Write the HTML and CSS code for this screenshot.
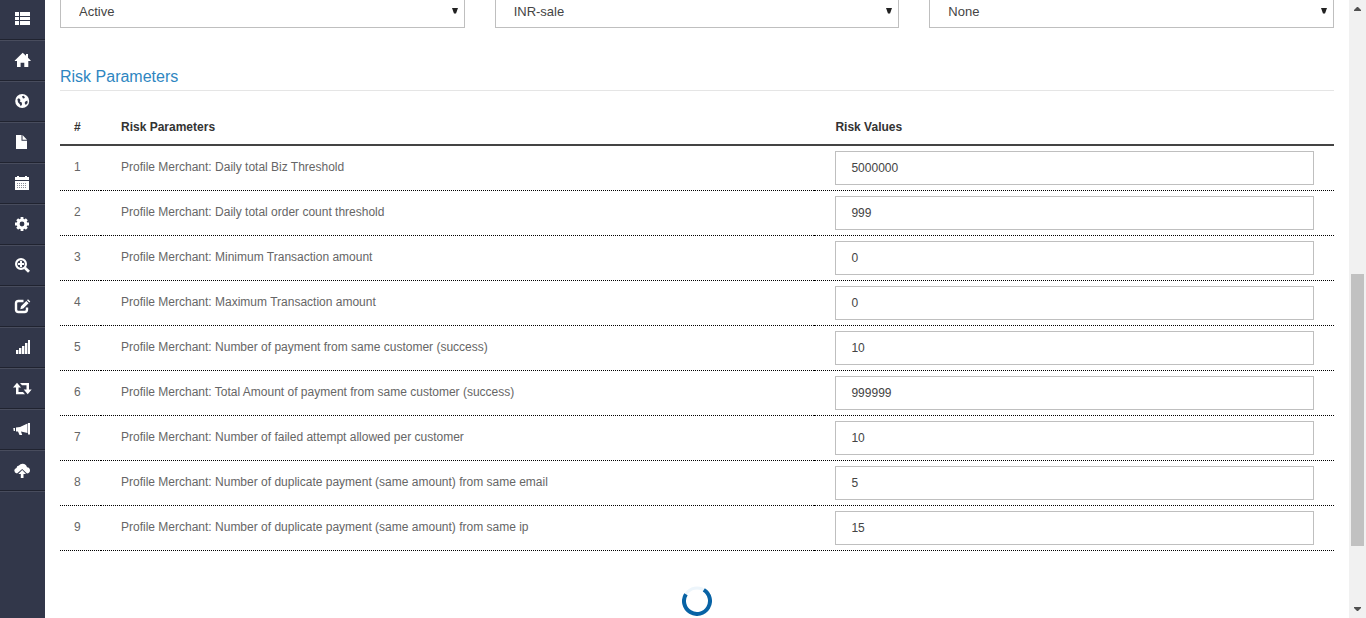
FILE: index.html
```html
<!DOCTYPE html>
<html lang="en">
<head>
<meta charset="utf-8">
<title>Risk Parameters</title>
<link rel="stylesheet" href="styles.css">
</head>
<body>
<nav class="sidebar" aria-label="Main menu">
  <a class="nav-item" href="#list" aria-label="List"><svg class="icon" viewBox="0 0 17 17"><path d="M1 1h4v4H1zM6 1h10v4H6zM1 6h4v3H1zM6 6h10v3H6zM1 10h4v4H1zM6 10h10v4H6z" fill="#fff"/></svg></a>
  <a class="nav-item" href="#home" aria-label="Home"><svg class="icon" viewBox="0 0 17 17"><path d="M8.700.7 12 3.700V2h2v3.700L16.700 8.500V9H14.300v6h-4v-4.300H6.600V15H3V9H.8v-.5z" fill="#fff"/></svg></a>
  <a class="nav-item" href="#globe" aria-label="Regions"><svg class="icon" viewBox="0 0 17 17"><circle cx="8.200" cy="8" r="7" fill="#fff"/><path d="M8 3.200 9.500 2.800 11 4.200 10 5.600 8.800 5.200zM3.400 6 5 5.200 6.500 7 5.800 8.400 7.800 9.600 8 11.400 6.800 13.200 5.800 11.200 4 9.200zM11.400 8.400l2-1 .2 2.600-1.800 2-1.200-2z" fill="#32374a"/></svg></a>
  <a class="nav-item" href="#file" aria-label="Documents"><svg class="icon" viewBox="0 0 17 17"><path d="M2 1h5.500v5.800H13V15H2zM8.500 1 13 5.800H8.500z" fill="#fff"/></svg></a>
  <a class="nav-item" href="#calendar" aria-label="Calendar"><svg class="icon" viewBox="0 0 17 17"><path d="M1 2h2V1h2v1h6V1h2v1h2v3H1zM1 6h14v9H1z" fill="#fff"/><path d="M3 8.500h10M3 10.500h10M3 12.500h10" stroke="#8a8d99" stroke-dasharray="1 1"/></svg></a>
  <a class="nav-item" href="#settings" aria-label="Settings"><svg class="icon" viewBox="0 0 17 17"><circle cx="8" cy="8" r="3.900" fill="none" stroke="#fff" stroke-width="3"/><path d="M8 1v3M8 12v3M1 8h3M12 8h3M3.200 3.200l2 2M10.800 10.800l2 2M3.200 12.800l2-2M10.800 5.200l2-2" stroke="#fff" stroke-width="2.800"/></svg></a>
  <a class="nav-item" href="#search" aria-label="Search"><svg class="icon" viewBox="0 0 17 17"><circle cx="7" cy="7" r="4.900" fill="none" stroke="#fff" stroke-width="2.200"/><path d="M7 4v6M4 7h6" stroke="#fff" stroke-width="2"/><path d="m10.800 10.800 4.200 4" stroke="#fff" stroke-width="2.800"/></svg></a>
  <a class="nav-item" href="#edit" aria-label="Edit"><svg class="icon" viewBox="0 0 17 17"><path d="M9.500 3H4.500Q2 3 2 5.500v6Q2 14 4.500 14H10.500Q13 14 13 11.500V9.500" fill="none" stroke="#fff" stroke-width="2.400"/><path d="m6.300 11.300.7-3L12.300 3l2.300 2.300-5.300 5.300zM13 2.300l1-1 2.300 2.300-1 1z" fill="#fff"/></svg></a>
  <a class="nav-item" href="#stats" aria-label="Statistics"><svg class="icon" viewBox="0 0 17 17"><path d="M2 11h2.400v4H2zM5 9h2.400v6H5zM8 7h2.400v8H8zM11 4h2.400v11H11zM14 1h2v14h-2z" fill="#fff"/></svg></a>
  <a class="nav-item" href="#transfer" aria-label="Transfer"><svg class="icon" viewBox="0 0 17 17"><path d="M3 2.700 7 7.500H4.500v4.500H9l2 2.300H2V7.500H-1zM6 3h9v6.500h2.700l-4 4.800-4-4.800h2.800V5.300H8z" fill="#fff"/></svg></a>
  <a class="nav-item" href="#announce" aria-label="Announcements"><svg class="icon" viewBox="0 0 17 17"><path d="M-.7 7H1v3H-.3zM2 6.500 6 6l7.500-3.500v9.500L7 10.500l1.200 3.500H5.500L4 10.500H2zM14 2h2v11.500h-2z" fill="#fff"/></svg></a>
  <a class="nav-item" href="#upload" aria-label="Upload"><svg class="icon" viewBox="0 0 17 17"><path d="M3 11.500Q.3 11 .3 8.600.3 6.500 2.500 6 2.600 3.700 5 3.500 6.300 1.600 8.700 1.700q3.400.2 4.300 3.600 3 .3 3 3.200-.1 2.700-3 3L8.200 7z" fill="#fff"/><path d="M8.200 8 12 12H9.500v4H6.800v-4H4.300z" fill="#fff"/></svg></a>
</nav>
<main class="content">
  <form class="form">
    <div class="select-row">
      <div class="select-box"><select class="control select" aria-label="Status"><option>Active</option></select><svg class="caret" viewBox="0 0 6 6"><path d="M0 0h6L4 5.500H2z" fill="#222"/></svg></div>
      <div class="select-box"><select class="control select" aria-label="Currency"><option>INR-sale</option></select><svg class="caret" viewBox="0 0 6 6"><path d="M0 0h6L4 5.500H2z" fill="#222"/></svg></div>
      <div class="select-box"><select class="control select" aria-label="Option"><option>None</option></select><svg class="caret" viewBox="0 0 6 6"><path d="M0 0h6L4 5.500H2z" fill="#222"/></svg></div>
    </div>
    <h2 class="section-title">Risk Parameters</h2>
    <table class="risk-table">
      <thead><tr><th class="col-number">#</th><th class="col-name">Risk Parameters</th><th class="col-value">Risk Values</th></tr></thead>
      <tbody>
        <tr><td>1</td><td><label for="risk1">Profile Merchant: Daily total Biz Threshold</label></td><td><input class="control" id="risk1" type="text" value="5000000"></td></tr>
        <tr><td>2</td><td><label for="risk2">Profile Merchant: Daily total order count threshold</label></td><td><input class="control" id="risk2" type="text" value="999"></td></tr>
        <tr><td>3</td><td><label for="risk3">Profile Merchant: Minimum Transaction amount</label></td><td><input class="control" id="risk3" type="text" value="0"></td></tr>
        <tr><td>4</td><td><label for="risk4">Profile Merchant: Maximum Transaction amount</label></td><td><input class="control" id="risk4" type="text" value="0"></td></tr>
        <tr><td>5</td><td><label for="risk5">Profile Merchant: Number of payment from same customer (success)</label></td><td><input class="control" id="risk5" type="text" value="10"></td></tr>
        <tr><td>6</td><td><label for="risk6">Profile Merchant: Total Amount of payment from same customer (success)</label></td><td><input class="control" id="risk6" type="text" value="999999"></td></tr>
        <tr><td>7</td><td><label for="risk7">Profile Merchant: Number of failed attempt allowed per customer</label></td><td><input class="control" id="risk7" type="text" value="10"></td></tr>
        <tr><td>8</td><td><label for="risk8">Profile Merchant: Number of duplicate payment (same amount) from same email</label></td><td><input class="control" id="risk8" type="text" value="5"></td></tr>
        <tr><td>9</td><td><label for="risk9">Profile Merchant: Number of duplicate payment (same amount) from same ip</label></td><td><input class="control" id="risk9" type="text" value="15"></td></tr>
      </tbody>
    </table>
  </form>
  <svg class="spinner" viewBox="0 0 30 30" role="img" aria-label="Loading"><circle cx="15" cy="15" r="13" fill="none" stroke="#edf5fb" stroke-width="3"/><path d="M3.900 8.200A13 13 0 1 0 21.800 3.900" fill="none" stroke="#0863a5" stroke-width="4"/></svg>
</main>
<div class="scrollbar" aria-hidden="true">
  <svg class="scroll-arrow" viewBox="0 0 17 17"><path d="M5 11h7v-1L9 7H8l-3 3z" fill="#505050"/></svg>
  <div class="scroll-track"><div class="scroll-before"></div><div class="scroll-thumb"></div><div class="scroll-after"></div></div>
  <svg class="scroll-arrow" viewBox="0 0 17 17"><path d="M5 6h7v1l-3 3H8L5 7z" fill="#505050"/></svg>
</div>
</body>
</html>
```
FILE: styles.css
```css
* { box-sizing: border-box; }

body {
  display: flex;
  height: 100vh;
  margin: 0;
  overflow: hidden;
  background: #fff;
  color: #666;
  font: 12px/17px "Liberation Sans", Arial, sans-serif;
}

.sidebar {
  flex: 0 0 45px;
  margin-top: -1px;
  background: #32374a;
}

.nav-item {
  display: flex;
  justify-content: center;
  padding: 11px 0;
  border-top: 1px solid #484c5d;
  border-bottom: 1px solid #202330;
}

.nav-item:last-child { box-shadow: 0 1px #484c5d; }

.icon {
  width: 17px;
  height: 17px;
  overflow: visible;
}

.content {
  flex: 1;
  min-width: 0;
  padding: 0 15px;
}

.select-row {
  display: grid;
  grid-template-columns: repeat(3, 1fr);
  gap: 30px;
  margin-top: -6px;
}

.select-box { position: relative; }

.control {
  display: block;
  width: 100%;
  height: 34px;
  padding: 0 15px;
  border: 1px solid #bfbfbf;
  border-radius: 0;
  background: #fff;
  color: #444;
  font: inherit;
}

.select {
  appearance: none;
  padding: 0 18px;
  font-size: 13px;
}

.caret {
  position: absolute;
  top: 14px;
  right: 7px;
  width: 6px;
  height: 6px;
  pointer-events: none;
}

.section-title {
  margin: 39px 0 20px;
  padding-bottom: 3px;
  border-bottom: 1px solid #e5e5e5;
  color: #2e86c1;
  font-size: 16px;
  font-weight: 400;
  line-height: 20px;
}

.risk-table {
  width: 100%;
  table-layout: fixed;
  border-spacing: 0;
}

.risk-table th {
  padding: 8px 20px;
  border-bottom: 2px solid #444;
  color: #333;
  text-align: left;
}

.risk-table td {
  padding: 13px 20px 0;
  border-bottom: 1px dotted #000;
  vertical-align: top;
}

.risk-table td:last-child { padding: 5px 20px; }

.risk-table th:last-child,
.risk-table td:last-child { padding-left: 21px; }

.risk-table th:first-child,
.risk-table td:first-child {
  padding-left: 14px;
  padding-right: 0;
}

.col-number { width: 41px; }
.col-name { width: 56%; }

.spinner {
  display: block;
  width: 30px;
  height: 30px;
  margin: 35px auto 0;
}

.scrollbar {
  display: flex;
  flex: 0 0 17px;
  flex-direction: column;
  background: #f1f1f1;
}

.scroll-arrow {
  flex: none;
  width: 17px;
  height: 17px;
}

.scroll-track {
  display: flex;
  flex: 1;
  flex-direction: column;
  padding: 0 2px;
}

.scroll-before { flex: 257; }
.scroll-thumb { flex: 272; background: #c1c1c1; }
.scroll-after { flex: 55; }
```
